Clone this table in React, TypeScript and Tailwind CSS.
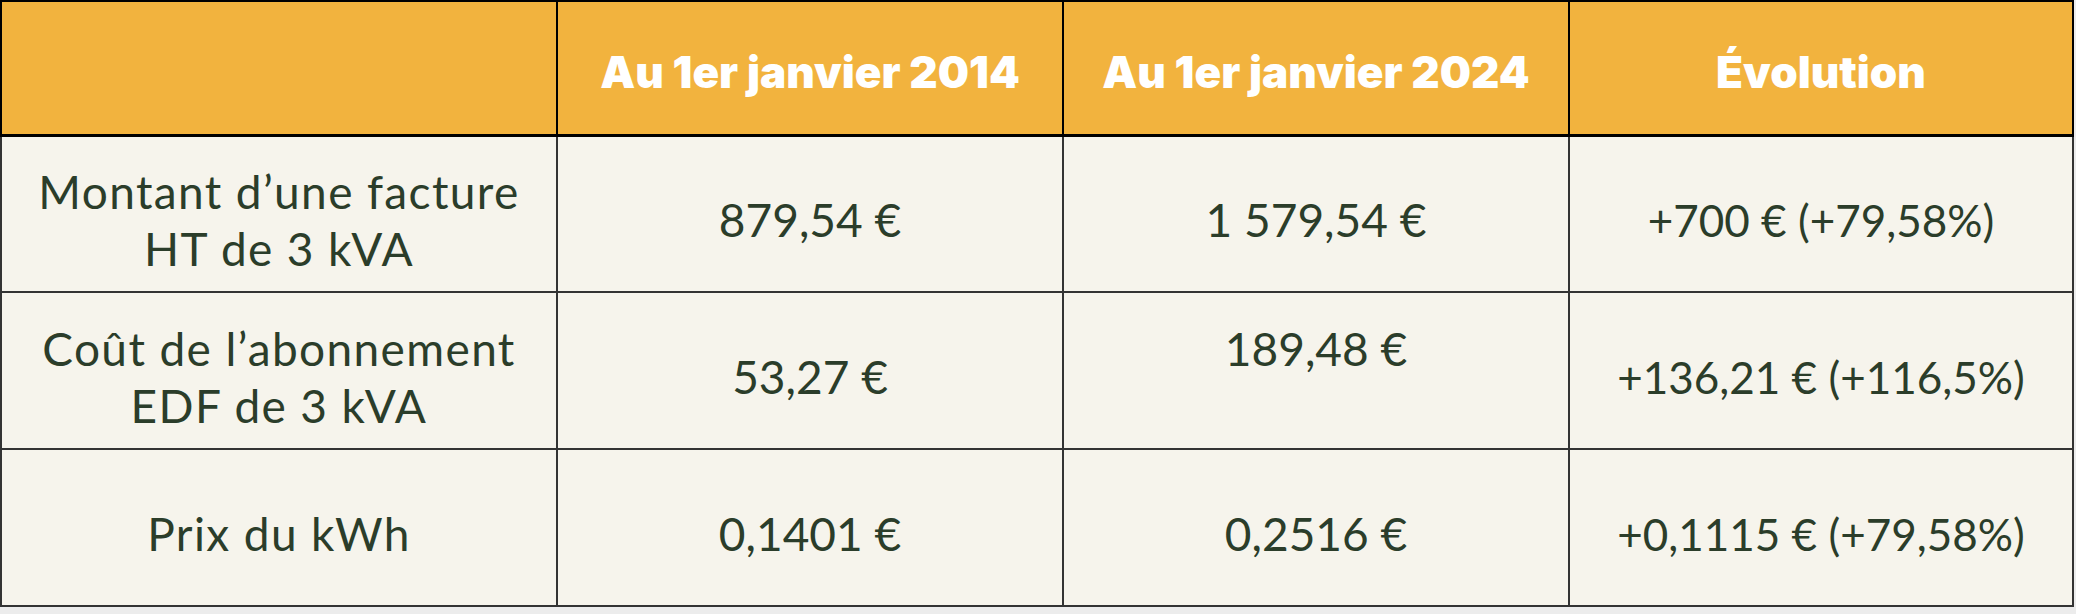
const rows = [
  {
    label: ["Montant d\u2019une facture", "HT de 3 kVA"],
    y2014: "879,54 €",
    y2024: "1 579,54 €",
    evo: "+700 € (+79,58%)",
  },
  {
    label: ["Coût de l\u2019abonnement", "EDF de 3 kVA"],
    y2014: "53,27 €",
    y2024: "189,48 €",
    evo: "+136,21 € (+116,5%)",
    raised: true,
  },
  {
    label: ["Prix du kWh"],
    y2014: "0,1401 €",
    y2024: "0,2516 €",
    evo: "+0,1115 € (+79,58%)",
  },
];

const headers = ["", "Au 1er janvier 2014", "Au 1er janvier 2024", "Évolution"];

export default function App() {
  return (
    <div className="h-[614px] w-[2076px] bg-[#ececec]">
      <table
        className="w-[2074px] table-fixed border-collapse border-2 border-black text-[#2b3d2a]"
        style={{ fontFamily: "Lato, 'Open Sans', sans-serif" }}
      >
        <colgroup>
          <col className="w-[556px]" />
          <col className="w-[506px]" />
          <col className="w-[506px]" />
          <col />
        </colgroup>
        <thead>
          <tr className="h-[134px] bg-[#f2b33e]">
            {headers.map((h, i) => (
              <th
                key={i}
                className="border-x-2 border-b-[3px] border-black pt-2 text-center text-[44px] font-black text-white"
                style={{ fontFamily: "Inter, 'Open Sans', sans-serif" }}
              >
                {h}
              </th>
            ))}
          </tr>
        </thead>
        <tbody className="bg-[#f6f4ec]">
          {rows.map((r, i) => (
            <tr key={i} className="h-[157px]">
              <td className="border-2 border-[#333] pt-3 text-center text-[46px] leading-[57px] tracking-[0.03em]">
                {r.label.map((l) => (
                  <div key={l}>{l}</div>
                ))}
              </td>
              <td className="border-2 border-[#333] pt-3 text-center text-[46px]">{r.y2014}</td>
              <td className="border-2 border-[#333] pt-3 text-center text-[46px] leading-[57px]">
                {r.raised ? (
                  <>
                    <div>{r.y2024}</div>
                    <div>&nbsp;</div>
                  </>
                ) : (
                  r.y2024
                )}
              </td>
              <td className="border-2 border-[#333] pt-3 text-center text-[44px]">{r.evo}</td>
            </tr>
          ))}
        </tbody>
      </table>
    </div>
  );
}
